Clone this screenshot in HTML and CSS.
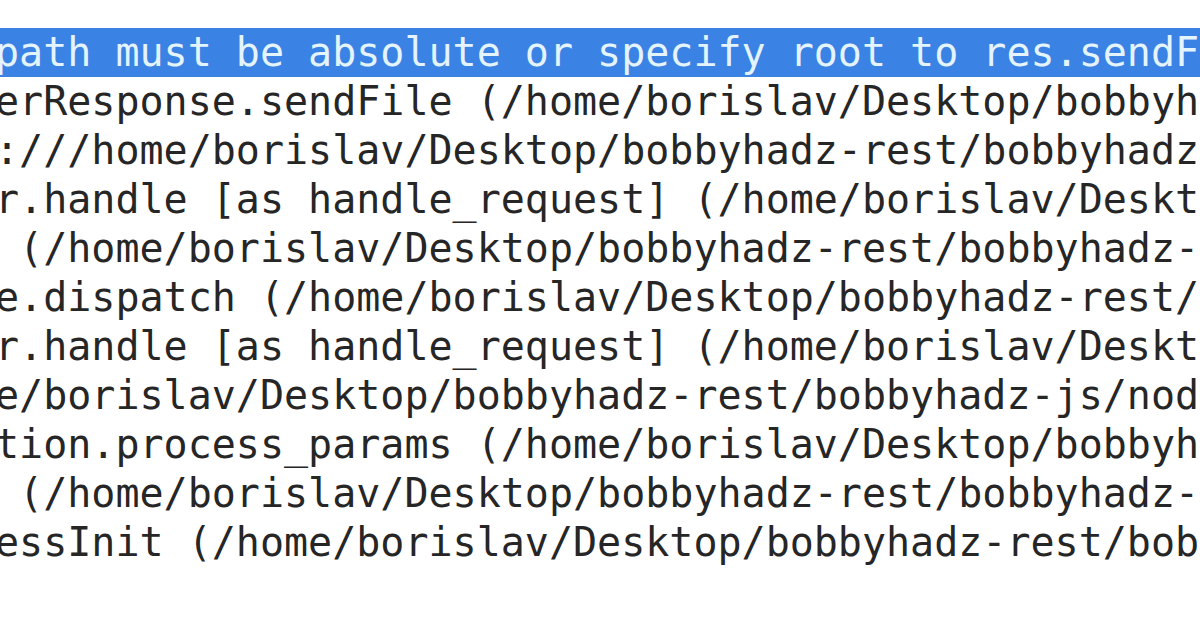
FILE: index.html
```html
<!DOCTYPE html>
<html>
<head>
<meta charset="utf-8">
<link rel="stylesheet" href="styles.css">
</head>
<body>
<div class="term">
<div class="line sel">path must be absolute or specify root to res.sendFi</div>
<div class="line">erResponse.sendFile (/home/borislav/Desktop/bobbyha</div>
<div class="line">:///home/borislav/Desktop/bobbyhadz-rest/bobbyhadz-</div>
<div class="line">r.handle [as handle_request] (/home/borislav/Deskto</div>
<div class="line"> (/home/borislav/Desktop/bobbyhadz-rest/bobbyhadz-j</div>
<div class="line">e.dispatch (/home/borislav/Desktop/bobbyhadz-rest/b</div>
<div class="line">r.handle [as handle_request] (/home/borislav/Deskto</div>
<div class="line">e/borislav/Desktop/bobbyhadz-rest/bobbyhadz-js/node</div>
<div class="line">tion.process_params (/home/borislav/Desktop/bobbyha</div>
<div class="line"> (/home/borislav/Desktop/bobbyhadz-rest/bobbyhadz-j</div>
<div class="line">essInit (/home/borislav/Desktop/bobbyhadz-rest/bobb</div>
</div>
</body>
</html>
```

FILE: styles.css
```css
html, body {
  margin: 0;
  padding: 0;
  background: #ffffff;
  overflow: hidden;
  width: 1200px;
  height: 628px;
}
.term {
  padding-top: 28px;
  margin-left: -5px;
  font-family: "DejaVu Sans Mono", monospace;
  font-size: 40px;
  line-height: 49px;
  color: #262626;
  overflow: hidden;
}
.line {
  height: 49px;
  white-space: pre;
  overflow: hidden;
}
.sel {
  background: #3a82e4;
  color: #e4f4ff;
}
```
